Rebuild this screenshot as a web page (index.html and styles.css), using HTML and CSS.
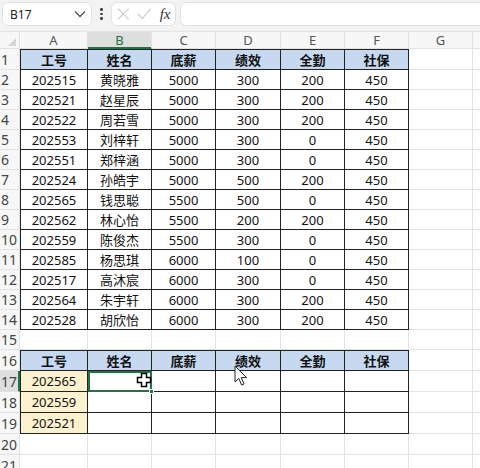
FILE: index.html
```html
<!DOCTYPE html>
<html lang="zh-CN">
<head>
  <meta charset="UTF-8">
  <title>Sheet</title>
  <link rel="stylesheet" href="styles.css">
</head>
<body>
  <div class="toolbar">
    <div class="name-box">
      <span>B17</span>
      <svg width="12" height="8" viewBox="0 0 12 8"><path d="M1 1.5 L6 6.5 L11 1.5" fill="none" stroke="#555" stroke-width="1.4"/></svg>
    </div>
    <div class="dots"><i></i><i></i><i></i></div>
    <div class="fx-box">
      <svg width="14" height="14" viewBox="0 0 14 14"><path d="M1 1 L13 13 M13 1 L1 13" stroke="#c8c8c8" stroke-width="1.2"/></svg>
      <svg width="16" height="14" viewBox="0 0 16 14"><path d="M1 7 L6 12 L15 1" fill="none" stroke="#c8c8c8" stroke-width="1.2"/></svg>
      <span class="fx">fx</span>
    </div>
    <div class="formula"></div>
  </div>

  <div class="grid-wrap">
  <table class="sheet">
    <colgroup>
      <col class="c-rh"><col class="c-a"><col class="c-n"><col class="c-n"><col class="c-d"><col class="c-n"><col class="c-n"><col class="c-n"><col>
    </colgroup>
    <tr class="col-head">
      <th class="corner"><span class="tri"></span></th>
      <th>A</th><th class="sel">B</th><th>C</th><th>D</th><th>E</th><th>F</th><th>G</th><th></th>
    </tr>
    <tr>
      <th class="rh">1</th>
      <td class="hd dk dl dt">工号</td><td class="hd dk dt">姓名</td><td class="hd dk dt">底薪</td><td class="hd dk dt">绩效</td><td class="hd dk dt">全勤</td><td class="hd dk dt">社保</td><td></td><td></td>
    </tr>
    <tr><th class="rh">2</th><td class="dk dl">202515</td><td class="dk">黄晓雅</td><td class="dk">5000</td><td class="dk">300</td><td class="dk">200</td><td class="dk">450</td><td></td><td></td></tr>
    <tr><th class="rh">3</th><td class="dk dl">202521</td><td class="dk">赵星辰</td><td class="dk">5000</td><td class="dk">300</td><td class="dk">200</td><td class="dk">450</td><td></td><td></td></tr>
    <tr><th class="rh">4</th><td class="dk dl">202522</td><td class="dk">周若雪</td><td class="dk">5000</td><td class="dk">300</td><td class="dk">200</td><td class="dk">450</td><td></td><td></td></tr>
    <tr><th class="rh">5</th><td class="dk dl">202553</td><td class="dk">刘梓轩</td><td class="dk">5000</td><td class="dk">300</td><td class="dk">0</td><td class="dk">450</td><td></td><td></td></tr>
    <tr><th class="rh">6</th><td class="dk dl">202551</td><td class="dk">郑梓涵</td><td class="dk">5000</td><td class="dk">300</td><td class="dk">0</td><td class="dk">450</td><td></td><td></td></tr>
    <tr><th class="rh">7</th><td class="dk dl">202524</td><td class="dk">孙皓宇</td><td class="dk">5000</td><td class="dk">500</td><td class="dk">200</td><td class="dk">450</td><td></td><td></td></tr>
    <tr><th class="rh">8</th><td class="dk dl">202565</td><td class="dk">钱思聪</td><td class="dk">5500</td><td class="dk">500</td><td class="dk">0</td><td class="dk">450</td><td></td><td></td></tr>
    <tr><th class="rh">9</th><td class="dk dl">202562</td><td class="dk">林心怡</td><td class="dk">5500</td><td class="dk">200</td><td class="dk">200</td><td class="dk">450</td><td></td><td></td></tr>
    <tr><th class="rh">10</th><td class="dk dl">202559</td><td class="dk">陈俊杰</td><td class="dk">5500</td><td class="dk">300</td><td class="dk">0</td><td class="dk">450</td><td></td><td></td></tr>
    <tr><th class="rh">11</th><td class="dk dl">202585</td><td class="dk">杨思琪</td><td class="dk">6000</td><td class="dk">100</td><td class="dk">0</td><td class="dk">450</td><td></td><td></td></tr>
    <tr><th class="rh">12</th><td class="dk dl">202517</td><td class="dk">高沐宸</td><td class="dk">6000</td><td class="dk">300</td><td class="dk">0</td><td class="dk">450</td><td></td><td></td></tr>
    <tr><th class="rh">13</th><td class="dk dl">202564</td><td class="dk">朱宇轩</td><td class="dk">6000</td><td class="dk">300</td><td class="dk">200</td><td class="dk">450</td><td></td><td></td></tr>
    <tr><th class="rh">14</th><td class="dk dl">202528</td><td class="dk">胡欣怡</td><td class="dk">6000</td><td class="dk">300</td><td class="dk">200</td><td class="dk">450</td><td></td><td></td></tr>
    <tr><th class="rh">15</th><td></td><td></td><td></td><td></td><td></td><td></td><td></td><td></td></tr>
    <tr>
      <th class="rh">16</th>
      <td class="hd dk dl dt">工号</td><td class="hd dk dt">姓名</td><td class="hd dk dt">底薪</td><td class="hd dk dt">绩效</td><td class="hd dk dt">全勤</td><td class="hd dk dt">社保</td><td></td><td></td>
    </tr>
    <tr class="tall">
      <th class="rh sel">17</th>
      <td class="dk dl key">202565</td>
      <td class="dk active"><span class="handle"></span>
        <svg class="cross" width="16" height="16" viewBox="0 0 16 16"><path d="M5.5 1.5 H10.5 V5.5 H14.5 V10.5 H10.5 V14.5 H5.5 V10.5 H1.5 V5.5 H5.5 Z" fill="#fff" stroke="#000" stroke-width="1.5"/></svg>
      </td>
      <td class="dk"></td>
      <td class="dk">
        <svg class="arrow" width="14" height="22" viewBox="0 0 14 22"><path d="M1 1 V17 L4.8 13.4 L7.6 20 L10 19 L7.3 12.6 L12.5 12.6 Z" fill="#fff" stroke="#222" stroke-width="1"/></svg>
      </td>
      <td class="dk"></td><td class="dk"></td><td></td><td></td>
    </tr>
    <tr class="tall"><th class="rh">18</th><td class="dk dl key">202559</td><td class="dk"></td><td class="dk"></td><td class="dk"></td><td class="dk"></td><td class="dk"></td><td></td><td></td></tr>
    <tr class="tall"><th class="rh">19</th><td class="dk dl key">202521</td><td class="dk"></td><td class="dk"></td><td class="dk"></td><td class="dk"></td><td class="dk"></td><td></td><td></td></tr>
    <tr class="tall"><th class="rh">20</th><td></td><td></td><td></td><td></td><td></td><td></td><td></td><td></td></tr>
    <tr class="tall"><th class="rh">21</th><td></td><td></td><td></td><td></td><td></td><td></td><td></td><td></td></tr>
  </table>
  </div>
</body>
</html>
```

FILE: styles.css
```css
* {
  box-sizing: border-box;
}

body {
  margin: 0;
  background: #fff;
  font-family: "Noto Sans", "Noto Sans CJK SC", sans-serif;
  overflow: hidden;
}

.toolbar {
  display: flex;
  align-items: center;
  height: 32px;
  padding: 2px 0 5px 2px;
  background: #f3f3f3;
  border-bottom: 1px solid #e4e4e4;
}

.name-box {
  display: flex;
  align-items: center;
  justify-content: space-between;
  width: 90px;
  height: 24px;
  padding: 0 5px 0 7px;
  background: #fff;
  border: 1px solid #e2e2e2;
  border-radius: 6px;
  font-size: 12px;
  color: #222;
}

.dots {
  display: flex;
  flex-direction: column;
  gap: 2px;
  margin: 0 8px 0 8px;
}

.dots i {
  display: block;
  width: 2.5px;
  height: 2.5px;
  background: #444;
  border-radius: 50%;
}

.fx-box {
  display: flex;
  align-items: center;
  gap: 8px;
  width: 65px;
  height: 24px;
  padding: 0 4px 0 5px;
  background: #fff;
  border: 1px solid #e2e2e2;
  border-radius: 6px;
}

.fx {
  font-family: "Liberation Serif", serif;
  font-style: italic;
  font-size: 15px;
  color: #333;
}

.formula {
  flex: 1;
  height: 24px;
  margin-left: 4px;
  background: #fff;
  border: 1px solid #e2e2e2;
  border-right: none;
  border-radius: 6px 0 0 6px;
}

.grid-wrap {
  width: 480px;
  overflow: hidden;
}

.sheet {
  border-collapse: separate;
  border-spacing: 0;
  table-layout: fixed;
  width: 540px;
  font-size: 13px;
  color: #111;
}

.c-rh { width: 20px; }
.c-a { width: 68px; }
.c-n { width: 64px; }
.c-d { width: 65px; }

.sheet td,
.sheet th {
  height: 20px;
  padding: 0;
  border-right: 1px solid #e2e2e2;
  border-bottom: 1px solid #e2e2e2;
  text-align: center;
  white-space: nowrap;
  position: relative;
}

.sheet tr.tall td,
.sheet tr.tall th {
  height: 21px;
}

.col-head th {
  height: 17px;
  font-weight: normal;
  font-size: 13px;
  color: #555;
  background: #f7f7f7;
  line-height: 15px;
}

.col-head th.sel {
  background: #dedede;
  color: #217346;
  border-bottom-color: #217346;
  box-shadow: inset 0 -1px 0 #217346;
}

.corner .tri {
  position: absolute;
  right: 3px;
  bottom: 2px;
  border-left: 8px solid transparent;
  border-bottom: 8px solid #d4d4d4;
}

.sheet th.rh {
  font-weight: normal;
  font-size: 14px;
  color: #444;
  background: #f7f7f7;
  text-align: left;
  padding-left: 1px;
  overflow: hidden;
}

.sheet th.rh.sel {
  background: #dedede;
  border-right: 2px solid #217346;
}

.sheet td.dk {
  border-right-color: #222;
  border-bottom-color: #222;
}

.sheet td.dl {
  border-left: 1px solid #222;
}

.sheet td.dt {
  border-top: 1px solid #222;
}

.sheet td.hd {
  background: #c6d9f0;
  font-weight: bold;
}

.sheet td.key {
  background: #fdf2cf;
}

.sheet td.active {
  outline: 2px solid #217346;
  outline-offset: -2px;
}

.handle {
  position: absolute;
  right: -3px;
  bottom: -3px;
  width: 5px;
  height: 5px;
  background: #217346;
  border: 1px solid #fff;
  z-index: 2;
}

.cross {
  position: absolute;
  left: 48px;
  top: 1px;
  z-index: 3;
}

.arrow {
  position: absolute;
  left: 18px;
  top: -6px;
  z-index: 3;
}
```
